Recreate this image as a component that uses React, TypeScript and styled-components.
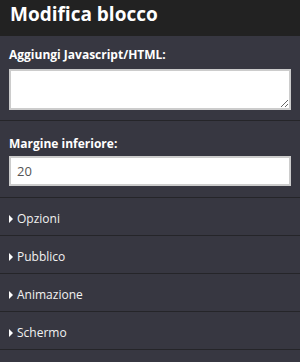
import styled, { createGlobalStyle } from "styled-components";

const GlobalStyle = createGlobalStyle`
  html, body {
    margin: 0;
    padding: 0;
    background: #373741;
  }
  body {
    font-family: "Open Sans", "Liberation Sans", sans-serif;
  }
`;

const SPanel = styled.div`
  width: 300px;
  height: 362px;
  background: #373741;
  color: #fff;
  overflow: hidden;
`;

const SHeader = styled.div`
  height: 36px;
  padding: 0 10px;
  background: #222222;
`;

const STitle = styled.h1`
  margin: 0;
  font-size: 19px;
  line-height: 28px;
  font-weight: 700;
  color: #fff;
`;

const SSection = styled.div<{ $top: number; $bottom: number }>`
  padding: ${(p) => p.$top}px 9px ${(p) => p.$bottom}px 9px;
  border-bottom: 1px solid #252529;
`;

const SLabel = styled.label<{ $gap: number }>`
  display: block;
  font-size: 12px;
  line-height: 18px;
  font-weight: 700;
  color: #fff;
  margin-bottom: ${(p) => p.$gap}px;
`;

const STextArea = styled.textarea`
  display: block;
  box-sizing: border-box;
  width: 100%;
  height: 41px;
  margin: 0;
  border: 2px solid #cccccc;
  background: #fff;
  font-family: inherit;
  font-size: 13px;
  padding: 4px 6px;
  outline: none;
`;

const SInput = styled.input`
  display: block;
  box-sizing: border-box;
  width: 100%;
  height: 30px;
  margin: 0;
  border: 2px solid #cccccc;
  background: #fff;
  font-family: inherit;
  font-size: 13px;
  color: #555;
  padding: 0 6px;
  outline: none;
`;

const SRow = styled.div`
  box-sizing: border-box;
  display: flex;
  align-items: center;
  gap: 4px;
  height: 38px;
  padding: 4px 9px 0 9px;
  border-bottom: 1px solid #252529;
  font-size: 12px;
  color: #f2f2f2;
  cursor: pointer;
`;

const SArrow = styled.span`
  width: 0;
  height: 0;
  border-top: 4px solid transparent;
  border-bottom: 4px solid transparent;
  border-left: 4px solid #fff;
`;

const sections = ["Opzioni", "Pubblico", "Animazione", "Schermo"];

export default function App() {
  return (
    <SPanel>
      <GlobalStyle />
      <SHeader>
        <STitle>Modifica blocco</STitle>
      </SHeader>
      <SSection $top={10} $bottom={10}>
        <SLabel $gap={5}>Aggiungi Javascript/HTML:</SLabel>
        <STextArea />
      </SSection>
      <SSection $top={14} $bottom={11}>
        <SLabel $gap={3}>Margine inferiore:</SLabel>
        <SInput defaultValue="20" />
      </SSection>
      {sections.map((s) => (
        <SRow key={s}>
          <SArrow />
          {s}
        </SRow>
      ))}
    </SPanel>
  );
}
